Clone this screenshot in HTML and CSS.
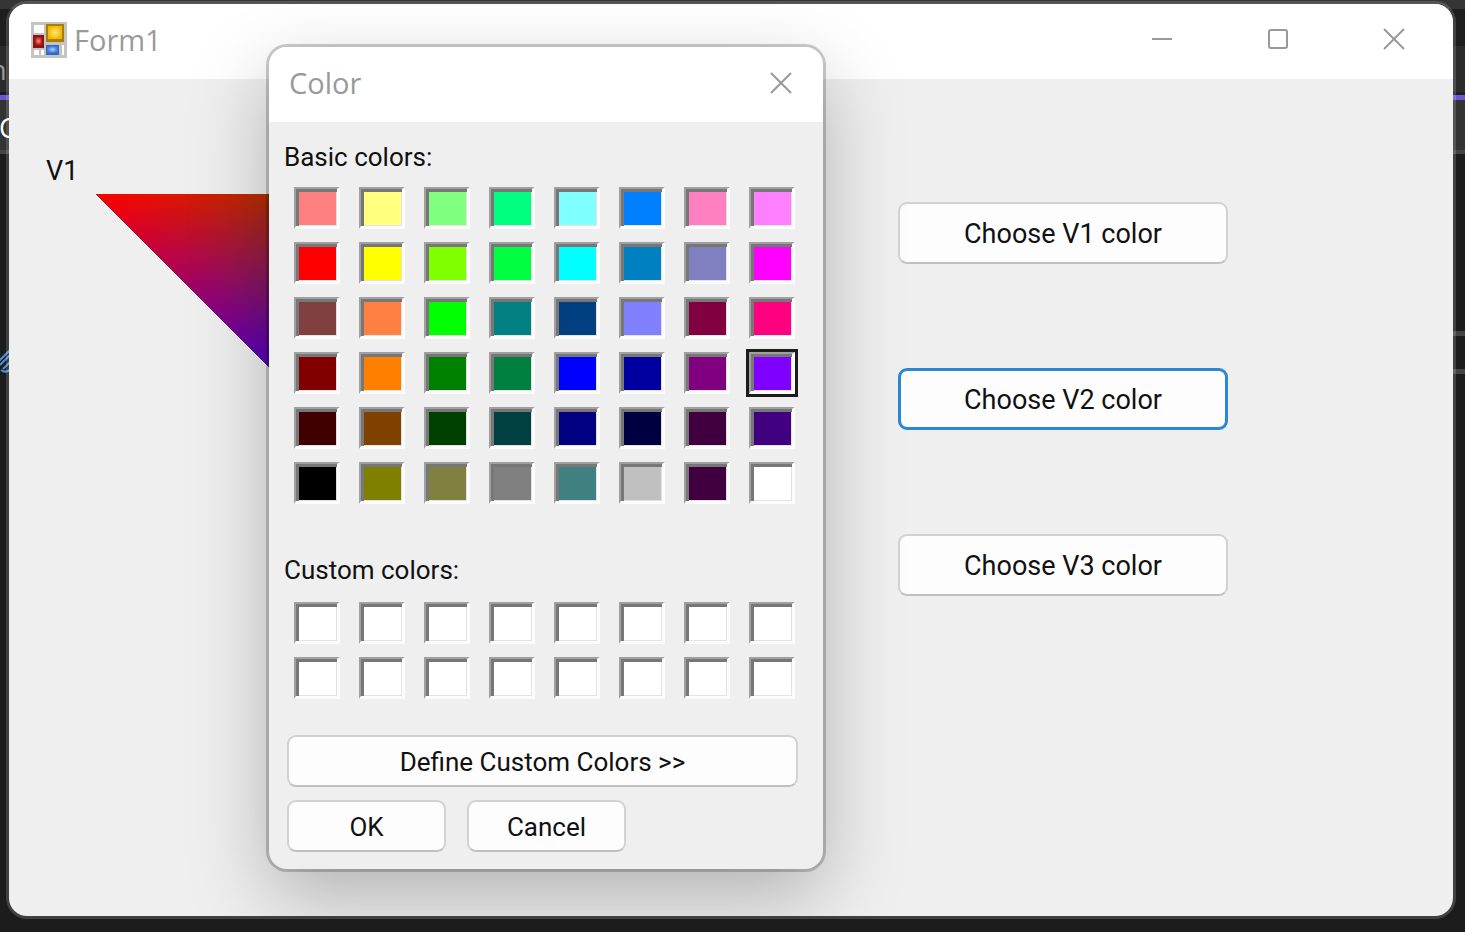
FILE: index.html
```html
<!DOCTYPE html>
<html lang="en">
<head>
<meta charset="utf-8">
<title>Form1</title>
<link rel="stylesheet" href="styles.css">
</head>
<body>
<div class="desktop">
  <div class="backdrop" aria-hidden="true">
    <div class="strip strip-menu"></div>
    <div class="strip strip-dark"></div>
    <div class="strip strip-tabs">n</div>
    <div class="strip strip-accent"></div>
    <div class="strip strip-nav">C</div>
    <div class="strip strip-editor">
      <svg class="hatch" width="24" height="26" viewBox="0 0 24 26" fill="none" stroke="#4f8fd0" stroke-width="2"><path d="M-2 14 12 0M1 22Q6 26 12 20L24 8M0 17 12 5M3 21 18 6"/></svg>
    </div>
  </div>

  <main class="window">
    <header class="titlebar">
      <svg class="app-icon" width="36" height="36" viewBox="0 0 36 36">
        <defs>
          <radialGradient id="gold"><stop offset="0" stop-color="#ffe680"/><stop offset="1" stop-color="#f0b800"/></radialGradient>
          <radialGradient id="ruby"><stop offset="0" stop-color="#f09080"/><stop offset="1" stop-color="#b41c18"/></radialGradient>
          <radialGradient id="sky"><stop offset="0" stop-color="#a8d0ff"/><stop offset="1" stop-color="#3a74dc"/></radialGradient>
        </defs>
        <path fill="#c4c4c4" d="M0 0h36v36H0z"/>
        <path fill="#fff" d="M3 3h10v8H3zM3 28h5v5H3zM10 28h3v5h-3zM31 23h2v10h-2z"/>
        <path fill="#a87d00" d="M15 2h18v18H15z"/><path fill="url(#gold)" d="M17 4h14v13H17z"/>
        <path fill="#8c1512" d="M2 13h11v13H2z"/><path fill="url(#ruby)" d="M4 15h7v8H4z"/>
        <path fill="#3668b8" d="M15 23h13v10H15z"/><path fill="url(#sky)" d="M16 24h11v7H16z"/>
      </svg>
      <h1 class="title">Form1</h1>
      <div class="controls">
        <button class="control" aria-label="Minimize"><svg width="22" height="22" viewBox="0 0 22 22"><path d="M1 11h20"/></svg></button>
        <button class="control" aria-label="Maximize"><svg width="22" height="22" viewBox="0 0 22 22"><rect x="2" y="2" width="18" height="18" rx="2"/></svg></button>
        <button class="control" aria-label="Close"><svg width="22" height="22" viewBox="0 0 22 22"><path d="M1 1 21 21M21 1 1 21"/></svg></button>
      </div>
    </header>

    <section class="form-body">
      <div class="canvas">
        <span class="vertex">V1</span>
        <svg class="triangle" width="594" height="258" viewBox="0 0 594 258">
          <defs>
            <linearGradient id="r" gradientUnits="userSpaceOnUse" x1="0" y1="0" x2="218" y2="285"><stop offset="0" stop-color="#f00"/><stop offset="1" stop-color="#000"/></linearGradient>
            <linearGradient id="g" gradientUnits="userSpaceOnUse" x1="0" y1="0" x2="297" y2="-297"><stop offset="0" stop-color="#000"/><stop offset="1" stop-color="#00a000"/></linearGradient>
            <linearGradient id="b" gradientUnits="userSpaceOnUse" x1="0" y1="0" x2="0" y2="230"><stop offset="0" stop-color="#000"/><stop offset="1" stop-color="#00f"/></linearGradient>
          </defs>
          <path fill="url(#r)" d="M0 0H594L258 258z"/>
          <path class="add" fill="url(#g)" d="M0 0H594L258 258z"/>
          <path class="add" fill="url(#b)" d="M0 0H594L258 258z"/>
        </svg>
      </div>
      <div class="actions">
        <button class="btn btn-lg">Choose V1 color</button>
        <button class="btn btn-lg btn-active">Choose V2 color</button>
        <button class="btn btn-lg">Choose V3 color</button>
      </div>
    </section>

    <div class="dialog" role="dialog" aria-labelledby="dialog-title">
      <header class="dialog-bar">
        <h2 class="title" id="dialog-title">Color</h2>
        <button class="dialog-close" aria-label="Close"><svg width="22" height="22" viewBox="0 0 22 22"><path d="M1 1 21 21M21 1 1 21"/></svg></button>
      </header>
      <div class="dialog-body">
        <h3 class="label" id="basic-label">Basic colors:</h3>
        <div class="swatches" id="basic" role="radiogroup" aria-labelledby="basic-label"></div>
        <h3 class="label label-custom" id="custom-label">Custom colors:</h3>
        <div class="swatches" id="custom" role="radiogroup" aria-labelledby="custom-label"></div>
        <div class="dialog-actions">
          <button class="btn btn-wide">Define Custom Colors &gt;&gt;</button>
          <button class="btn">OK</button>
          <button class="btn">Cancel</button>
        </div>
      </div>
    </div>
  </main>
</div>
<script src="swatches.js"></script>
</body>
</html>
```

FILE: styles.css
```css
* { box-sizing: border-box; }

body {
  margin: 0;
  background: #1c1c1c;
  color: #111;
  font-family: Roboto, sans-serif;
  font-size: 27px;
  line-height: 32px;
}

button { font: inherit; color: inherit; padding: 0; margin: 0; }

.desktop {
  display: grid;
  min-height: 100vh;
  overflow: hidden;
}

.backdrop, .window { grid-area: 1 / 1; min-width: 0; }

.backdrop { display: flex; flex-direction: column; font-family: "Open Sans", sans-serif; }
.strip { overflow: hidden; }
.strip-menu { height: 9px; background: #353535; }
.strip-dark { height: 37px; background: #1e1e1e; }
.strip-tabs { height: 46px; background: #2b2b2b; color: #999; line-height: 48px; text-indent: -10px; }
.strip-accent { height: 8px; background: #6a58d0; border-top: 3px solid #1e1e1e; }
.strip-nav { height: 54px; background: #333; color: #fff; border-bottom: 4px solid #444; line-height: 56px; text-indent: -1px; }
.strip-editor {
  flex: 1;
  padding-top: 194px;
  background: linear-gradient(#444, #444) right 177px / 20px 5px no-repeat,
              linear-gradient(#444, #444) right 215px / 20px 5px no-repeat, #1c1c1c;
}
.hatch { display: block; }

.window {
  position: relative;
  display: flex;
  flex-direction: column;
  margin: 1px 9px 13px 6px;
  border: 3px solid rgba(255, 255, 255, .16);
  border-radius: 21px;
  background: #efefef;
  background-clip: padding-box;
  overflow: hidden;
}

.titlebar {
  display: flex;
  align-items: center;
  height: 75px;
  padding: 0 1px 3px 22px;
  background: #fff;
}

.title {
  margin: 0;
  color: #999;
  font: 400 29px/40px "Open Sans", "Noto Sans", sans-serif;
}
.titlebar .title { margin-left: 7px; }

.controls { display: flex; margin-left: auto; height: 70px; align-self: flex-start; }
.control { width: 116px; border: 0; background: none; }
.control svg, .dialog-close svg { display: block; margin: auto; fill: none; stroke: #999; stroke-width: 2; }

.form-body { display: flex; flex: 1; justify-content: space-between; }
.canvas { padding: 76px 0 0 37px; }
.vertex { display: block; }
.triangle { display: block; margin: 7px 0 0 50px; isolation: isolate; }
.add { mix-blend-mode: screen; }

.actions { display: flex; flex-direction: column; gap: 104px; padding: 123px 225px 0 0; }

.btn {
  height: 52px;
  padding-top: 2px;
  border: 2px solid #d2d2d2;
  border-bottom-color: #c0c0c0;
  border-radius: 9px;
  background: #fdfdfd;
}
.btn-lg { width: 330px; height: 62px; }
.btn-active { border: 3px solid #2a88d4; }

.dialog {
  position: absolute;
  left: 260px;
  top: 43px;
  width: 554px;
  border-radius: 18px;
  background: #efefef;
  font-size: 26px;
  box-shadow: 0 0 0 3px rgba(0, 0, 0, .2), 0 28px 80px rgba(0, 0, 0, .26);
}
.dialog-bar {
  display: flex;
  align-items: center;
  justify-content: space-between;
  height: 75px;
  padding: 0 20px 4px;
  border-radius: 18px 18px 0 0;
  background: #fff;
}
.dialog-close { width: 44px; height: 44px; border: 0; background: none; }

.dialog-body { padding: 19px 25px 17px 15px; }
.label { margin: 0 0 14px; font: inherit; }
.label-custom { margin: 50px 0 16px; }

.swatches {
  display: grid;
  grid-template-columns: repeat(8, 46px);
  gap: 13px 19px;
  padding-left: 10px;
}
.swatch {
  appearance: none;
  height: 42px;
  margin: 0;
  border: 3px solid;
  border-width: 2px 3px 3px 2px;
  border-color: #a0a0a0 #fcfcfc #fcfcfc #a0a0a0;
  box-shadow: inset 3px 3px #777, inset -1px -1px #e3e3e3;
}
.swatch:checked { outline: 3px solid #1c1c1c; }

.dialog-actions {
  display: grid;
  grid-template-columns: 159px 159px;
  gap: 13px 21px;
  margin: 36px 0 0 3px;
}
.btn-wide { width: 511px; grid-column: 1 / -1; }
```

FILE: swatches.js
```js
const basic = [
  'ff8080 ffff80 80ff80 00ff80 80ffff 0080ff ff80c0 ff80ff',
  'ff0000 ffff00 80ff00 00ff40 00ffff 0080c0 8080c0 ff00ff',
  '804040 ff8040 00ff00 008080 004080 8080ff 800040 ff0080',
  '800000 ff8000 008000 008040 0000ff 0000a0 800080 8000ff',
  '400000 804000 004000 004040 000080 000040 400040 400080',
  '000000 808000 808040 808080 408080 c0c0c0 400040 ffffff'
].join(' ').split(' ');

function fill(id, colors, selected) {
  const group = document.getElementById(id);
  colors.forEach((color, i) => {
    const input = document.createElement('input');
    input.type = 'radio';
    input.name = 'color';
    input.className = 'swatch';
    input.setAttribute('aria-label', '#' + color);
    input.style.backgroundColor = '#' + color;
    if (color === selected) input.checked = true;
    group.append(input);
  });
}

fill('basic', basic, '8000ff');
fill('custom', Array(16).fill('ffffff'));
```
